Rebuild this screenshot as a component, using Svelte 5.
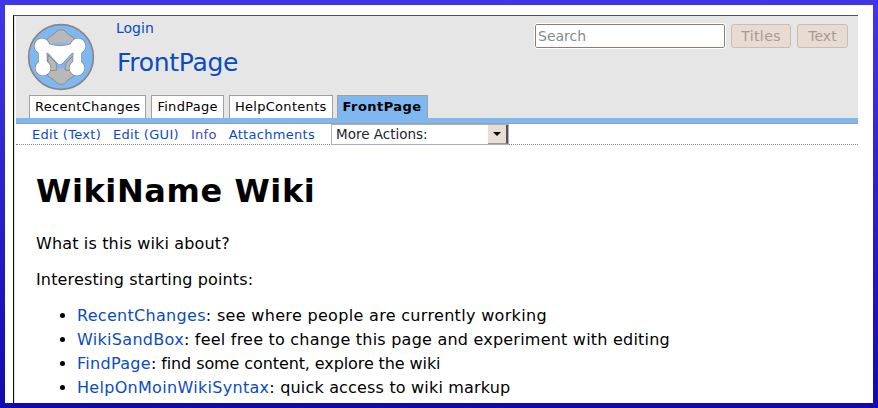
<script>
  const tabs = [
    { label: 'RecentChanges', current: false },
    { label: 'FindPage', current: false },
    { label: 'HelpContents', current: false },
    { label: 'FrontPage', current: true }
  ];

  const actions = ['Edit (Text)', 'Edit (GUI)', 'Info', 'Attachments'];

  // spacing per row: the text runs a little wider or narrower line by line
  const points = [
    { link: 'RecentChanges', text: ': see where people are currently working', spacing: 0.32 },
    { link: 'WikiSandBox', text: ': feel free to change this page and experiment with editing', spacing: 0.22 },
    { link: 'FindPage', text: ': find some content, explore the wiki', spacing: -0.1 },
    { link: 'HelpOnMoinWikiSyntax', text: ': quick access to wiki markup', spacing: 0.18 }
  ];

  const outline = [
    { color: '#7d7d7d', extra: 1.2 },
    { color: '#fff', extra: 0 }
  ];
</script>

<div class="frame">
  <div class="sheet">
    <div class="wiki">
      <header class="header">
        <div class="top">
          <svg class="logo" viewBox="0 0 68 68" aria-label="MoinMoin">
            <circle cx="34" cy="34" r="32.4" fill="#7fb8f0" stroke="#868686" stroke-width="1.6" />
            <path d="M21 15c2-2 6-3 8-6 2-3 8-3 10 0 2 3 6 4 8 6 2 3 0 8-3 9H24c-3-1-5-6-3-9z" fill="#b8b8b8" stroke="#7d7d7d" stroke-width=".7" />
            <path d="M21 53c2 2 6 3 8 6 2 3 8 3 10 0 2-3 6-4 8-6 2-3 0-8-3-9H24c-3 1-5 6-3 9z" fill="#b8b8b8" stroke="#7d7d7d" stroke-width=".7" />
            <path d="M24 21q10-3 20 0-10 3-20 0zM24 44q10-3 20 0-10 3-20 0z" fill="#7fb8f0" />
            <path d="M21 32l8 8 1 7-9 1zM47 32l-8 8-1 7 9 1z" fill="#b8b8b8" stroke="#7d7d7d" stroke-width=".7" />
            {#each outline as layer}
              <g fill="none" stroke={layer.color} stroke-linecap="round" stroke-linejoin="round">
                <path d="M15 23q18 9 36 0" stroke-width={9 + layer.extra} />
                <path d="M15.5 23L16 45M50.5 23L50 45" stroke-width={8 + layer.extra} />
                <path d="M24 27L33 37L42 27" stroke-width={8 + layer.extra} />
                <path d="M15 23h.01M51 23h.01M16 45h.01M50 45h.01" stroke-width={15 + layer.extra} />
              </g>
            {/each}
          </svg>
          <div class="titles">
            <a class="login" href="#login">Login</a>
            <h1 class="pagename">FrontPage</h1>
          </div>
          <form class="search">
            <input class="query" type="text" placeholder="Search" />
            <button class="go titles-btn" type="button" disabled>Titles</button>
            <button class="go text-btn" type="button" disabled>Text</button>
          </form>
        </div>
        <nav class="tabs">
          {#each tabs as tab}
            <a class="tab" class:current={tab.current} href="#tab">{tab.label}</a>
          {/each}
        </nav>
      </header>
      <div class="actions">
        <ul class="editbar">
          {#each actions as action}
            <li><a class:info={action === 'Info'} href="#action">{action}</a></li>
          {/each}
        </ul>
        <div class="select">
          <span>More Actions:</span>
          <span class="arrow"></span>
        </div>
      </div>
      <main class="content">
        <h1>WikiName Wiki</h1>
        <p>What is this wiki about?</p>
        <p>Interesting starting points:</p>
        <ul>
          {#each points as point}
            <li><a href="#page">{point.link}</a><span style="letter-spacing: {point.spacing}px">{point.text}</span></li>
          {/each}
        </ul>
      </main>
    </div>
  </div>
</div>

<style>
  :global(body) {
    margin: 0;
    overflow: hidden;
  }

  .frame {
    box-sizing: border-box;
    width: 878px;
    height: 408px;
    padding: 5px;
    background: linear-gradient(#4237e8, #0f0ab0);
    font-family: 'DejaVu Sans', sans-serif;
    overflow: hidden;
  }

  .sheet {
    box-sizing: border-box;
    height: 398px;
    padding: 10px 15px 0 8px;
    background: #fff;
    overflow: hidden;
  }

  .wiki {
    box-sizing: border-box;
    height: 388px;
    border-top: 1px solid #4a5560;
    border-left: 1px solid #111;
    padding-left: 2px;
    overflow: hidden;
    box-shadow: inset 1px 0 0 #ddd;
  }

  .header {
    height: 102px;
    background: #e6e6e6;
    border-bottom: 5px solid #7fb8f0;
    display: flex;
    flex-direction: column;
    justify-content: space-between;
  }

  .top {
    display: flex;
    align-items: flex-start;
    padding: 7px 10px 0 11px;
  }

  .logo {
    width: 68px;
    height: 68px;
    flex: none;
  }

  .titles {
    margin-left: 21px;
    flex: 1;
    display: flex;
    flex-direction: column;
  }

  .login {
    font-size: 14px;
    line-height: 14px;
    color: #0a4cc0;
    text-decoration: none;
    margin-top: -2px;
  }

  .pagename {
    margin: 13px 0 0 1px;
    font-size: 25px;
    font-weight: normal;
    line-height: 29px;
    letter-spacing: -0.3px;
    color: #0a4cc0;
  }

  .search {
    display: flex;
    gap: 6px;
    margin-top: 1px;
  }

  .query {
    box-sizing: border-box;
    width: 190px;
    height: 24px;
    margin: 0;
    padding: 0 2px;
    border: 1px solid #8f7f70;
    border-radius: 2px;
    background: #fff;
    outline: 1px solid #fff;
    font: 14px 'DejaVu Sans', sans-serif;
  }

  .query::placeholder {
    color: #8a8a8a;
    opacity: 1;
  }

  .go {
    box-sizing: border-box;
    height: 24px;
    margin: 0;
    padding: 0;
    border: 1px solid #cbbcae;
    border-radius: 3px;
    background: #e8dcd2;
    color: #a69a90;
    font: 14px 'DejaVu Sans', sans-serif;
  }

  .titles-btn {
    width: 60px;
    letter-spacing: 0.4px;
  }

  .text-btn {
    width: 51px;
  }

  .tabs {
    display: flex;
    gap: 5px;
    padding-left: 13px;
  }

  .tabs .tab + .tab.current {
    margin-left: -1px;
  }

  .tab {
    box-sizing: border-box;
    height: 23px;
    padding: 0 5px;
    border: 1px solid #a0a0a0;
    border-bottom: none;
    background: #fff;
    color: #000;
    font-size: 13px;
    line-height: 22px;
    letter-spacing: 0.3px;
    text-decoration: none;
  }

  .tab.current {
    background: #7fb8f0;
    font-weight: bold;
    letter-spacing: 0.45px;
  }

  .actions {
    display: flex;
    align-items: flex-start;
    height: 22px;
    border-top: 1px solid #a0a0a0;
    border-bottom: 1px dotted #888;
    box-sizing: border-box;
    padding-left: 16px;
  }

  .editbar {
    display: flex;
    gap: 12px;
    margin: 0;
    padding: 0;
    list-style: none;
    font-size: 13px;
    line-height: 21px;
    letter-spacing: 0.3px;
    width: 299px;
  }

  .editbar a {
    color: #0a4cc0;
    text-decoration: none;
  }

  .editbar a.info {
    color: #3f46c0;
  }

  .select {
    box-sizing: border-box;
    width: 178px;
    height: 21px;
    display: flex;
    justify-content: space-between;
    border: 1px solid #a8b0c0;
    padding-left: 4px;
    background: #fff;
    color: #1a2430;
    font-size: 13.5px;
    line-height: 19px;
  }

  .arrow {
    position: relative;
    width: 18px;
    background: #e6ddd4;
    border-right: 2px solid #555;
    border-bottom: 1px solid #999;
  }

  .arrow::after {
    content: '';
    position: absolute;
    left: 5px;
    top: 7px;
    border: 4px solid transparent;
    border-top: 4px solid #000;
    border-bottom: none;
  }

  .content {
    padding: 0 20px;
    font-size: 16px;
    line-height: 24px;
    color: #000;
  }

  .content h1 {
    margin: 27px 0 0 0;
    font-size: 32px;
    line-height: 38px;
    letter-spacing: 0.6px;
    font-weight: bold;
  }

  .content p {
    margin: 12px 0 0 0;
    letter-spacing: 0.15px;
  }

  .content h1 + p {
    margin-top: 22px;
  }

  .content ul {
    margin: 12px 0 0 0;
    padding-left: 41px;
  }

  .content a {
    color: #0a4cc0;
    text-decoration: none;
    letter-spacing: 0.3px;
  }
</style>
